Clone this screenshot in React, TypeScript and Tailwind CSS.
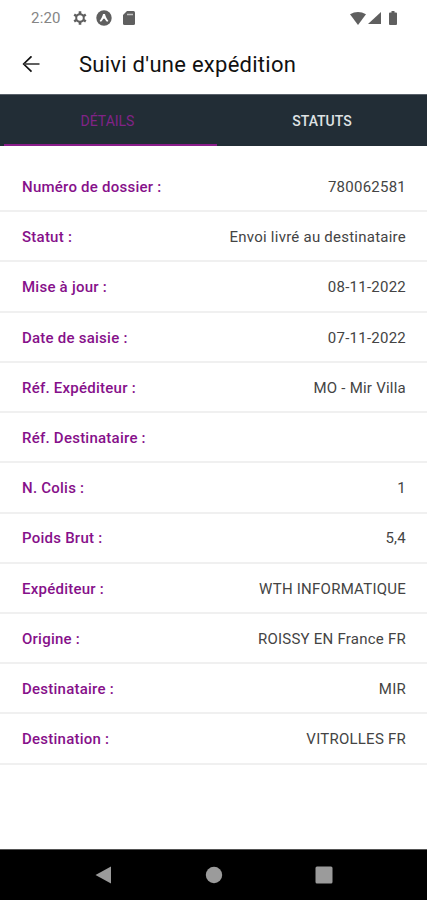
type DetailRowProps = {
  label: string;
  value?: string;
};

const details: DetailRowProps[] = [
  { label: "Numéro de dossier :", value: "780062581" },
  { label: "Statut :", value: "Envoi livré au destinataire" },
  { label: "Mise à jour :", value: "08-11-2022" },
  { label: "Date de saisie :", value: "07-11-2022" },
  { label: "Réf. Expéditeur :", value: "MO - Mir Villa" },
  { label: "Réf. Destinataire :" },
  { label: "N. Colis :", value: "1" },
  { label: "Poids Brut :", value: "5,4" },
  { label: "Expéditeur :", value: "WTH INFORMATIQUE" },
  { label: "Origine :", value: "ROISSY EN France FR" },
  { label: "Destinataire :", value: "MIR" },
  { label: "Destination :", value: "VITROLLES FR" },
];

function StatusBar() {
  return (
    <div className="flex h-[36px] items-center justify-between pl-[31px] pr-[30px] text-[#5f5f5f]">
      <div className="flex items-center">
        <span className="w-[42px] text-[15px] leading-none tracking-[0.2px] text-[#858585]">2:20</span>
        <svg className="h-[14px] w-[14px]" viewBox="0 0 14 14" fill="none" stroke="currentColor">
          <circle cx="7" cy="7" r="3.800" strokeWidth="2" />
          <path
            d="M7 .3v2.700M7 11v2.700M1.200 3.650l2.300 1.350M10.500 9l2.300 1.350M1.200 10.350l2.300-1.350M10.500 5l2.300-1.350"
            strokeWidth="2.600"
          />
        </svg>
        <svg className="ml-[9px] h-[16px] w-[16px]" viewBox="0 0 17 17">
          <circle cx="8.500" cy="8.500" r="8.200" fill="currentColor" />
          <path
            d="M3.800 11.800C5.800 9.500 6.800 6.800 7.500 4.300h2c.7 2.500 1.700 5.200 3.700 7.500l-1.400.8c-1.500-.8-2-3.600-3.300-3.600s-1.800 2.800-3.300 3.600z"
            fill="#fff"
          />
        </svg>
        <svg className="ml-[11px] h-[14px] w-[12px]" viewBox="0 0 12 14">
          <path d="M4 0h6.500Q12 0 12 1.500v11q0 1.500-1.500 1.500h-9Q0 14 0 12.500V4z" fill="currentColor" />
          <path d="M4 3.500h6" stroke="#c4c4c4" strokeWidth="1.500" />
        </svg>
      </div>
      <div className="flex items-center">
        <svg className="h-[13px] w-[16px]" viewBox="0 0 16 13" fill="currentColor">
          <path d="M0 2.200Q8-2.100 16 2.200L8 13z" />
        </svg>
        <svg className="ml-[2px] h-[12px] w-[13px]" viewBox="0 0 13 12" fill="currentColor">
          <path d="M13 0v12H0z" />
        </svg>
        <svg className="ml-[8px] h-[14px] w-[8px]" viewBox="0 0 8 14" fill="currentColor">
          <path d="M2.500 0h3v1.500H7q1 0 1 1V13q0 1-1 1H1q-1 0-1-1V2.500q0-1 1-1h1.500z" />
        </svg>
      </div>
    </div>
  );
}

function Header() {
  return (
    <header className="flex h-[58px] items-center pl-[22px]">
      <button className="h-[18px] w-[57px]" aria-label="Retour">
        <svg className="h-[18px] w-[18px]" viewBox="0 0 18 18" fill="none" stroke="#111" strokeWidth="1.700">
          <path d="M9.500.3L1.700 8l7.800 7.700" />
          <path d="M17.500 8H1.800" stroke="#444" />
        </svg>
      </button>
      <h1 className="text-[22px] leading-none tracking-[0.27px] text-[#111]">Suivi d'une expédition</h1>
    </header>
  );
}

function Tabs() {
  return (
    <nav className="flex h-[52px] border-t border-[#59616a] bg-[#222d36] text-[14px] leading-none">
      <button className="ml-[4px] flex w-[213px] items-center justify-center border-b-2 border-[#8b1d8b] pr-[6px] pt-[2px] text-[#812387]">
        DÉTAILS
      </button>
      <button className="flex flex-1 items-center justify-center font-medium text-[#dfe2e4]">STATUTS</button>
    </nav>
  );
}

function DetailRow({ label, value }: DetailRowProps) {
  return (
    <div className="flex h-[50.23px] items-center justify-between border-b-2 border-[#f0f0f0] pl-[22px] pr-[21px] pt-[2px] text-[15px] tracking-[0.24px]">
      <span className="font-medium text-[#86108a]">{label}</span>
      <span className="text-[#444]">{value}</span>
    </div>
  );
}

function NavigationBar() {
  return (
    <div className="flex h-[51px] justify-center border-t border-[#555] bg-black pt-[15.500px] text-[#9b9b9b]">
      <svg className="h-[18px] w-[238px]" viewBox="0 0 238 18" fill="currentColor">
        <path d="M16 .5v17L.5 9z" />
        <circle cx="119" cy="9" r="8.200" />
        <rect x="220.500" y=".5" width="17" height="17" rx="1.500" />
      </svg>
    </div>
  );
}

export default function App() {
  return (
    <div className="flex h-[900px] w-[427px] flex-col overflow-hidden bg-white font-['Roboto',sans-serif]">
      <StatusBar />
      <Header />
      <Tabs />
      <main className="flex-1 pt-[16px]">
        {details.map((detail) => (
          <DetailRow key={detail.label} {...detail} />
        ))}
      </main>
      <NavigationBar />
    </div>
  );
}
